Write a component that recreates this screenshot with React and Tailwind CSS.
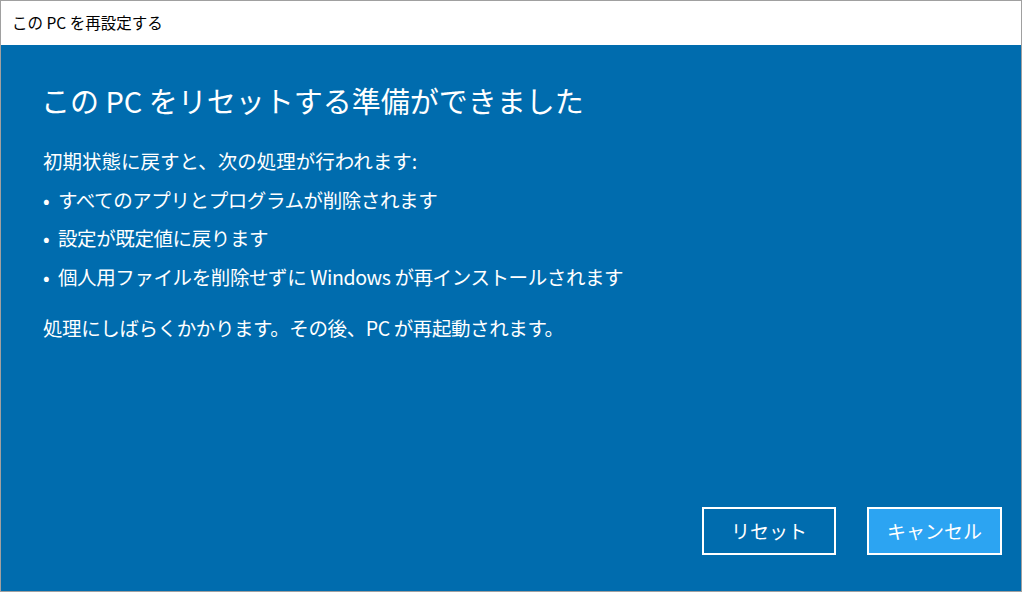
export default function App() {
  const font = { fontFamily: '"Noto Sans CJK JP", "Noto Sans", sans-serif' };
  const Bullet = ({ children }) => (
    <p className="flex">
      <span className="w-[15px] shrink-0">•</span>
      <span>{children}</span>
    </p>
  );
  return (
    <div className="w-[1022px] h-[592px] border border-[#a0a0a0] flex flex-col overflow-hidden" style={font}>
      <div className="h-[44px] shrink-0 bg-white flex items-center pl-[11px] text-[15.5px] text-black">
        この PC を再設定する
      </div>
      <div className="flex-1 bg-[#006cae] text-white flex flex-col pl-[40px] pr-[19px] pb-[36px]">
        <h1 className="mt-[35px] text-[29px] leading-[40px] font-normal">
          この PC をリセットする準備ができました
        </h1>
        <div className="mt-[22px] pl-[2px] text-[19.5px] leading-[38.5px] tracking-[-0.4px]">
          <p className="tracking-[0px]">初期状態に戻すと、次の処理が行われます:</p>
          <Bullet>すべてのアプリとプログラムが削除されます</Bullet>
          <Bullet>設定が既定値に戻ります</Bullet>
          <Bullet>個人用ファイルを削除せずに Windows が再インストールされます</Bullet>
          <p className="mt-[13px]">処理にしばらくかかります。その後、PC が再起動されます。</p>
        </div>
        <div className="mt-auto flex justify-end gap-[31px]">
          <button className="w-[134px] h-[48px] border-2 border-white bg-[#006cae] text-white text-[19px] flex items-center justify-center">
            リセット
          </button>
          <button className="w-[135px] h-[48px] border-2 border-white bg-[#2ca4f2] text-white text-[19px] flex items-center justify-center">
            キャンセル
          </button>
        </div>
      </div>
    </div>
  );
}
